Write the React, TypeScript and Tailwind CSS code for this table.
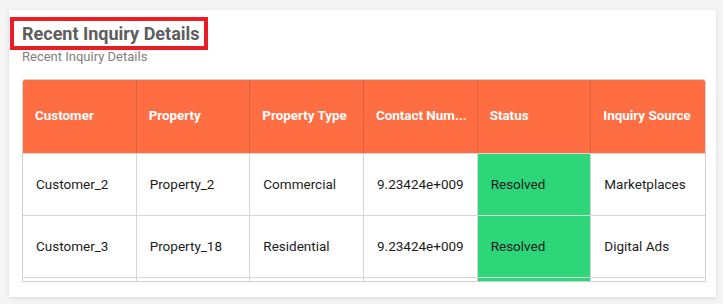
import React from 'react';

const columns = ['Customer', 'Property', 'Property Type', 'Contact Num...', 'Status', 'Inquiry Source'];

const rows = [
  ['Customer_2', 'Property_2', 'Commercial', '9.23424e+009', 'Resolved', 'Marketplaces'],
  ['Customer_3', 'Property_18', 'Residential', '9.23424e+009', 'Resolved', 'Digital Ads'],
  ['', '', '', '', '', ''],
];

const App: React.FC = () => {
  return (
    <div className="min-h-screen bg-[#f4f4f4] pt-[10px] pl-[9px] font-['Roboto',sans-serif]">
      {/* Card */}
      <div className="w-[707px] h-[287px] bg-white shadow-[0_1px_4px_rgba(0,0,0,0.12)] pt-[7px]">
        <div className="pl-[1px]">
          <h2 className="inline-block border-4 border-[#ec1c24] pl-[8px] pr-[4px] text-[18px] leading-[25px] font-bold text-[#5e5e5e]">
            Recent Inquiry Details
          </h2>
        </div>
        <p className="pl-[13px] text-[13px] leading-[13px] text-[#808080]">Recent Inquiry Details</p>

        {/* Table */}
        <div className="ml-[13px] mt-[16px] w-[684px] h-[203px] overflow-hidden border border-[#cfcfcf] rounded-tl-[3px] rounded-tr-[3px]">
          <div className="grid grid-cols-6 h-[73px] bg-[#ff6d42]">
            {columns.map((c, i) => (
              <div
                key={c}
                className={`flex items-center pl-[12px] text-[13.4px] font-bold text-white whitespace-nowrap ${i < 5 ? 'border-r border-[#e0613b]' : ''}`}
              >
                {c}
              </div>
            ))}
          </div>
          {rows.map((r, ri) => (
            <div key={ri} className="grid grid-cols-6 h-[62px] border-t border-[#d6d6d6]">
              {r.map((cell, ci) => (
                <div
                  key={ci}
                  className={`flex items-center pl-[13px] text-[13.5px] text-[#1c1c1c] ${ci < 5 ? 'border-r border-[#d6d6d6]' : ''} ${ci === 4 ? 'bg-[#2ed67a]' : ''}`}
                >
                  {cell}
                </div>
              ))}
            </div>
          ))}
        </div>
      </div>
    </div>
  );
};

export default App;
